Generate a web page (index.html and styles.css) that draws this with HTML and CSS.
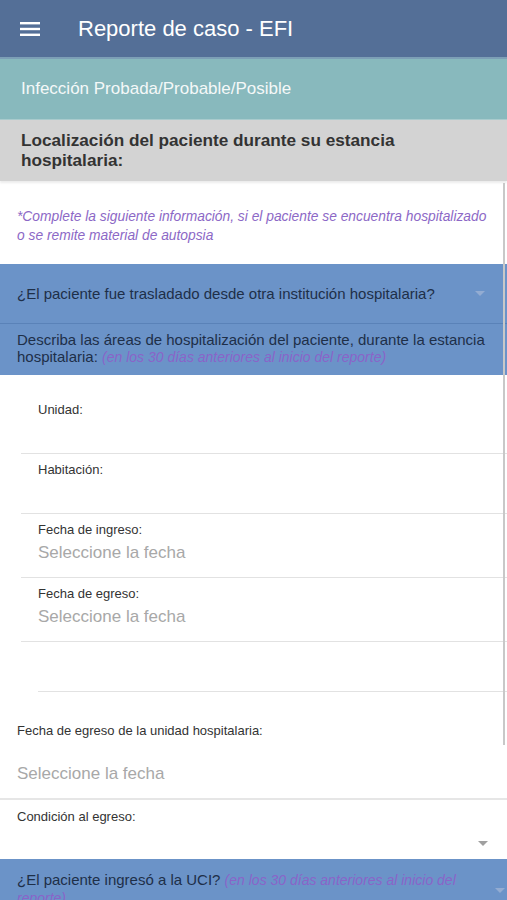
FILE: index.html
```html
<!DOCTYPE html>
<html lang="es">
<head>
  <meta charset="UTF-8">
  <title>Reporte de caso - EFI</title>
  <link rel="stylesheet" href="styles.css">
</head>
<body>
  <div class="topbar">
    <svg class="menu-icon" width="20" height="14" viewBox="0 0 20 14">
      <rect x="0" y="0" width="20" height="2.4" fill="#fff"/>
      <rect x="0" y="5.8" width="20" height="2.4" fill="#fff"/>
      <rect x="0" y="11.6" width="20" height="2.4" fill="#fff"/>
    </svg>
    <span class="title">Reporte de caso - EFI</span>
  </div>

  <div class="category">Infección Probada/Probable/Posible</div>

  <div class="section-title">Localización del paciente durante su estancia hospitalaria:</div>

  <div class="content">
    <div class="scroll-thumb"></div>

    <p class="note">*Complete la siguiente información, si el paciente se encuentra hospitalizado o se remite material de autopsia</p>

    <div class="question">
      <span>¿El paciente fue trasladado desde otra institución hospitalaria?</span>
      <span class="caret"></span>
    </div>

    <div class="describe">
      Describa las áreas de hospitalización del paciente, durante la estancia hospitalaria: <em class="hint">(en los 30 días anteriores al inicio del reporte)</em>
    </div>

    <div class="area-list">
      <div class="field">
        <label>Unidad:</label>
        <div class="empty"></div>
      </div>
      <div class="field">
        <label>Habitación:</label>
        <div class="empty"></div>
      </div>
      <div class="field">
        <label>Fecha de ingreso:</label>
        <div class="value">Seleccione la fecha</div>
      </div>
      <div class="field">
        <label>Fecha de egreso:</label>
        <div class="value">Seleccione la fecha</div>
      </div>
      <div class="field blank"></div>
    </div>

    <div class="wide-field">
      <label>Fecha de egreso de la unidad hospitalaria:</label>
      <div class="value">Seleccione la fecha</div>
    </div>

    <div class="select-field">
      <label>Condición al egreso:</label>
      <div class="select-row"><span class="caret gray"></span></div>
    </div>

    <div class="question uci">
      <span class="uci-text">¿El paciente ingresó a la UCI? <em class="hint">(en los 30 días anteriores al inicio del reporte)</em></span>
      <span class="caret"></span>
    </div>
  </div>
</body>
</html>
```

FILE: styles.css
```css
body {
  margin: 0;
  font-family: "Liberation Sans", Arial, sans-serif;
  color: #333;
  background: #fff;
  width: 507px;
  height: 900px;
  overflow: hidden;
}
.topbar {
  height: 57px;
  background-color: #546f97;
  border-bottom: 2px solid #7d9fb6;
  display: flex;
  align-items: center;
  padding-left: 20px;
}
.menu-icon {
  margin-right: 38px;
}
.title {
  color: #fff;
  font-size: 22px;
}
.category {
  height: 60px;
  background-color: #88b9bd;
  color: #f4f8f8;
  font-size: 17px;
  display: flex;
  align-items: center;
  padding-left: 21px;
  border-bottom: 1px solid #a9cbcd;
}
.section-title {
  height: 61px;
  box-sizing: border-box;
  background-color: #d3d3d3;
  font-size: 17.2px;
  font-weight: bold;
  line-height: 20px;
  padding: 10px 100px 0 21px;
  color: #333;
  box-shadow: 0 2px 2px rgba(0, 0, 0, 0.08);
}
.content {
  position: relative;
}
.scroll-thumb {
  position: absolute;
  right: 2px;
  top: 2px;
  width: 2px;
  height: 562px;
  background: #c8c8c8;
}
.note {
  margin: 0;
  height: 83px;
  box-sizing: border-box;
  padding: 26px 12px 0 17px;
  font-size: 13.8px;
  font-style: italic;
  line-height: 19px;
  color: #8c68c6;
}
.question {
  height: 60px;
  box-sizing: border-box;
  background-color: #6b93c8;
  border-bottom: 1px solid #5a82b8;
  display: flex;
  align-items: center;
  justify-content: space-between;
  padding: 0 22px 0 17px;
  font-size: 15px;
  color: #1e2f48;
}
.caret {
  flex-shrink: 0;
  width: 0;
  height: 0;
  border-left: 5px solid transparent;
  border-right: 5px solid transparent;
  border-top: 5px solid #93acd2;
}
.caret.gray {
  border-top-color: #a0a0a0;
}
.describe {
  height: 51px;
  box-sizing: border-box;
  background-color: #6b93c8;
  padding: 7px 10px 0 17px;
  font-size: 15px;
  line-height: 17px;
  color: #1e2f48;
}
.hint {
  color: #8a64c8;
  font-size: 14px;
}
.area-list {
  padding-top: 19px;
}
.field {
  margin-left: 21px;
  padding: 9px 0 0 17px;
  border-bottom: 1px solid #e2e2e2;
}
.field label,
.wide-field label,
.select-field label {
  display: block;
  font-size: 13px;
  line-height: 14px;
  color: #333;
}
.field .empty {
  height: 36px;
}
.field .value {
  margin-top: 4px;
  height: 24px;
  padding-bottom: 12px;
}
.value {
  font-size: 17px;
  line-height: 24px;
  color: #a8a8a8;
}
.field.blank {
  margin-left: 38px;
  padding: 0;
  height: 49px;
}
.wide-field {
  padding: 32px 0 0 17px;
  height: 108px;
  box-sizing: border-box;
  border-bottom: 2px solid #e6e6e6;
}
.wide-field .value {
  margin-top: 24px;
}
.select-field {
  padding: 10px 0 0 17px;
  height: 59px;
  box-sizing: border-box;
}
.select-row {
  display: flex;
  justify-content: flex-end;
  padding: 17px 19px 0 0;
}
.question.uci {
  align-items: flex-start;
  padding-top: 12px;
  padding-right: 2px;
  font-size: 15px;
  line-height: 18px;
}
.uci-text {
  padding-right: 30px;
}
.question.uci .caret {
  margin-top: 17px;
}
.question.uci .hint {
  font-size: 14px;
}
```
